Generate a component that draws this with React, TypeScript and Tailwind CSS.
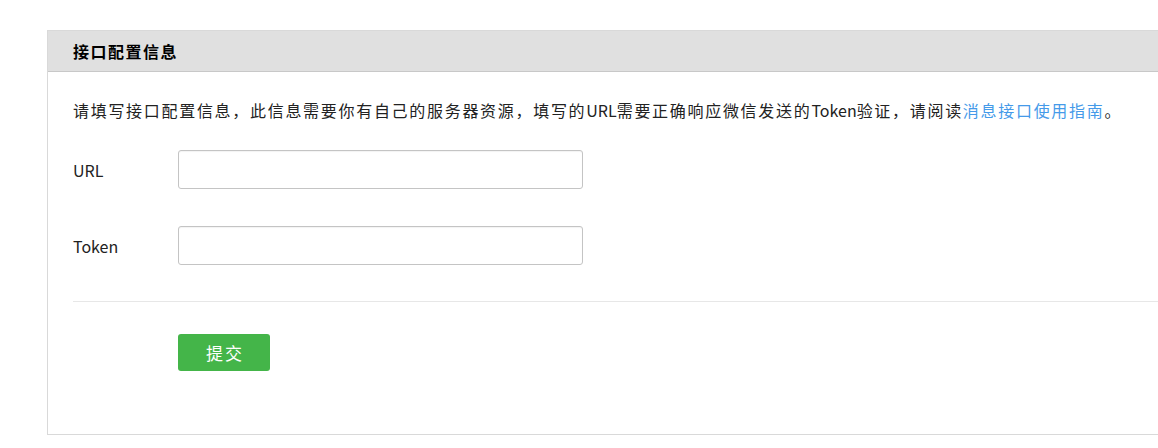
import React from "react";

export default function App() {
  return (
    <div
      className="w-[1158px] h-[448px] overflow-hidden bg-white pt-[30px] pl-[47px]"
      style={{ fontFamily: '"Noto Sans CJK SC", "Noto Sans", sans-serif' }}
    >
      <div className="w-[1200px] h-[405px] border border-[#d9d9d9] bg-white">
        <div className="h-[41px] bg-[#e0e0e0] border-b border-[#c8c8c8] flex items-center pl-[25px]">
          <h2 className="text-[16px] font-bold text-[#000] leading-none tracking-[1.5px]">接口配置信息</h2>
        </div>
        <div className="pl-[25px]">
          <p className="mt-[26px] text-[16px] leading-[24px] text-[#222] tracking-[1.7px] whitespace-nowrap">
            请填写接口配置信息，此信息需要你有自己的服务器资源，填写的
            <span className="tracking-normal">URL</span>
            需要正确响应微信发送的
            <span className="tracking-normal">Token</span>
            验证，请阅读
            <a className="text-[#459ae9]">消息接口使用指南</a>。
          </p>
          <div className="mt-[28px] flex items-center h-[39px]">
            <label className="w-[105px] text-[16px] text-[#222]">URL</label>
            <input className="w-[405px] h-[39px] border border-[#c4c4c4] rounded-[3px] outline-none shadow-[inset_0_1px_1px_rgba(0,0,0,0.05)]" />
          </div>
          <div className="mt-[37px] flex items-center h-[39px]">
            <label className="w-[105px] text-[16px] text-[#222]">Token</label>
            <input className="w-[405px] h-[39px] border border-[#c4c4c4] rounded-[3px] outline-none shadow-[inset_0_1px_1px_rgba(0,0,0,0.05)]" />
          </div>
          <div className="mt-[36px] border-t border-[#e7e7e7]" />
          <div className="mt-[32px] pl-[105px]">
            <button className="w-[92px] h-[37px] bg-[#44b549] rounded-[3px] text-white text-[17px] leading-none tracking-[2px] pl-[2px]">
              提交
            </button>
          </div>
        </div>
      </div>
    </div>
  );
}
